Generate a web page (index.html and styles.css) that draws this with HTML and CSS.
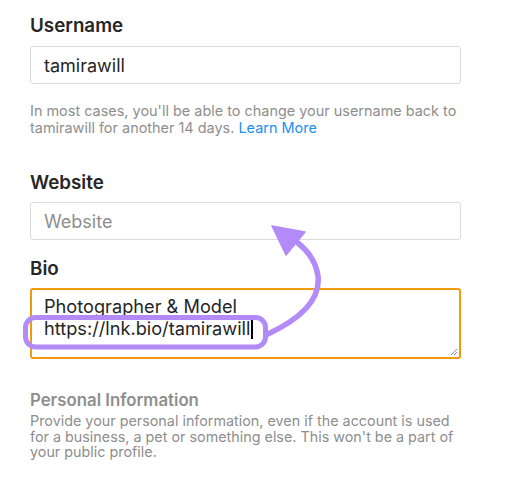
FILE: index.html
```html
<!DOCTYPE html>
<html lang="en">
<head>
<meta charset="utf-8">
<title>Edit profile</title>
<link rel="stylesheet" href="styles.css">
</head>
<body>
<main class="form">
  <section class="field">
    <label class="label" for="username">Username</label>
    <input class="input" id="username" type="text" value="tamirawill">
    <p class="help">In most cases, you'll be able to change your username back to tamirawill for another 14 days. <a class="link" href="#">Learn More</a></p>
  </section>

  <section class="field field-website">
    <label class="label" for="website">Website</label>
    <input class="input" id="website" type="text" placeholder="Website">
  </section>

  <section class="field field-bio">
    <div class="label">Bio</div>
    <div class="textarea">
      <div class="ta-line">Photographer &amp; Model</div>
      <div class="ta-line">https://lnk.bio/tamirawill<span class="caret"></span></div>
      <svg class="grip" width="8" height="8" viewBox="0 0 8 8"><path d="M7 1 L1 7 M7 4 L4 7" stroke="#8a8a8a" stroke-width="1"/></svg>
    </div>
  </section>

  <section class="personal">
    <h2 class="personal-title">Personal Information</h2>
    <p class="personal-text">Provide your personal information, even if the account is used for a business, a pet or something else. This won't be a part of your public profile.</p>
  </section>
</main>

<svg class="annotation" width="512" height="477" viewBox="0 0 512 477">
  <rect x="25.5" y="317.5" width="240" height="29.5" rx="10" ry="10" fill="none" stroke="#b28bf8" stroke-width="5"/>
  <path d="M268 334 C298 320 321 302 318 276 C316 262 309 252 298 243" fill="none" stroke="#b28bf8" stroke-width="5.5" stroke-linecap="round"/>
  <polygon points="272,226 305,232 286,255" fill="#b28bf8" stroke="#b28bf8" stroke-width="1.5" stroke-linejoin="round"/>
</svg>
</body>
</html>
```

FILE: styles.css
```css
html, body {
  margin: 0;
  padding: 0;
  background: #ffffff;
}

body {
  font-family: Inter, "Liberation Sans", Arial, sans-serif;
  color: #262626;
  width: 512px;
  height: 477px;
  overflow: hidden;
  position: relative;
}

.form {
  padding: 15px 0 0 30px;
  width: 431px;
}

.field {
  display: flex;
  flex-direction: column;
}

.label {
  font-size: 18.8px;
  line-height: 22px;
  font-weight: 600;
  color: #262626;
  margin-bottom: 9px;
}

.input {
  box-sizing: border-box;
  height: 38px;
  width: 431px;
  border: 1px solid #dbdbdb;
  border-radius: 3px;
  padding: 0 13px;
  font-family: inherit;
  font-size: 18px;
  color: #262626;
  background: #ffffff;
  outline: none;
  margin: 0;
}

.input::placeholder {
  color: #8e8e8e;
}

.help {
  margin: 18px 0 0 0;
  font-size: 14.45px;
  line-height: 17px;
  color: #8e8e8e;
}

.link {
  color: #1b8ff2;
  text-decoration: none;
}

.field-website {
  margin-top: 36px;
}

.field-website .label {
  margin-bottom: 8px;
}

.field-bio {
  margin-top: 18px;
}

.field-bio .label {
  margin-bottom: 8px;
}

.textarea {
  position: relative;
  box-sizing: border-box;
  width: 431px;
  height: 71px;
  border: 2px solid #f19a0e;
  border-radius: 3px;
  padding: 4.5px 12px 0 12px;
  font-size: 18.2px;
  line-height: 22.5px;
  color: #262626;
}

.caret {
  display: inline-block;
  width: 1.5px;
  height: 20px;
  background: #000000;
  vertical-align: -4px;
  margin-left: 1px;
}

.grip {
  position: absolute;
  right: 1px;
  bottom: 1px;
}

.personal {
  margin-top: 31px;
}

.personal-title {
  margin: 0;
  font-size: 16.8px;
  line-height: 20px;
  font-weight: 600;
  color: #8e8e8e;
}

.personal-text {
  margin: 3px 0 0 0;
  font-size: 14.35px;
  line-height: 15.5px;
  color: #8e8e8e;
}

.annotation {
  position: absolute;
  left: 0;
  top: 0;
  pointer-events: none;
}
```
